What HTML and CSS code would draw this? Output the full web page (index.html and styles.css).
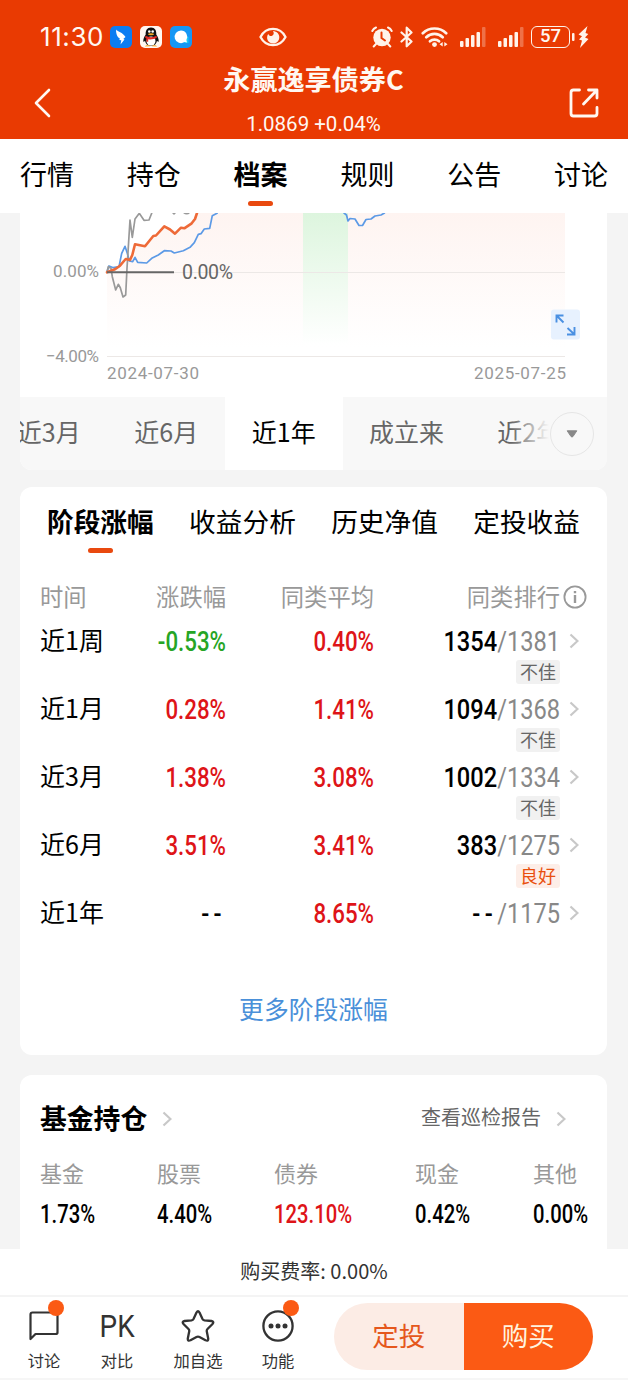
FILE: index.html
```
<!DOCTYPE html>
<html lang="zh-CN">
<head>
    <meta charset="UTF-8">
    <meta name="viewport" content="width=device-width, initial-scale=1.0">
    <title>永赢逸享债券C</title>
    <link rel="stylesheet" href="styles.css">
</head>
<body>
    <header class="header">
        <div class="status">
            <span class="time">11:30</span>
            <svg class="app-icon" width="22" height="22" viewBox="0 0 22 22">
                <rect width="22" height="22" rx="5" fill="#0b7df2"/>
                <path d="M6 3.500c1 1.800 7 3 9.500 7.500l-2.200 2 1.200.5-4 5 .8-4.200-2.200-.3 1-1.200C7.800 11.500 6 9 6 3.500z" fill="#fff"/>
            </svg>
            <svg class="app-icon" width="22" height="22" viewBox="0 0 22 22">
                <rect width="22" height="22" rx="5" fill="#fff7f2"/>
                <path d="M11 1.500c-4 0-5.500 3-5.300 7C4.500 10.500 3 13 3.300 15.500c.6.8 1.700-.7 1.700-.7.5 3 2.500 5 6 5s5.500-2 6-5c0 0 1.100 1.500 1.700.7.3-2.500-1.200-5-2.400-7 .2-4-1.300-7-5.300-7z" fill="#111"/>
                <ellipse cx="11" cy="15" rx="4.500" ry="4.500" fill="#fff"/>
                <path d="M5.500 9.800c3 1.800 8 1.800 11 0l.4 2c-3 1.700-6.500 1.800-8.700 1.400v2.600H6.500v-3.200l-1.300-.8z" fill="#e22a24"/>
                <circle cx="9.300" cy="5.500" r="1.300" fill="#fff"/>
                <circle cx="12.700" cy="5.500" r="1.300" fill="#fff"/>
                <ellipse cx="11" cy="8.300" rx="3" ry="1" fill="#f5a623"/>
                <path d="M5 20.500c.5-1.500 4-1.800 5.300-.3zM17 20.500c-.5-1.500-4-1.800-5.300-.3z" fill="#f5a623"/>
            </svg>
            <svg class="app-icon" width="22" height="22" viewBox="0 0 22 22">
                <rect width="22" height="22" rx="5" fill="#1597f5"/>
                <path d="M14 11h4.500v6c-1.500.3-3.500 0-4.500-.6z" fill="#19c8f6"/>
                <path d="M11 4.500a6.300 6.300 0 1 0 3.500 11.500l2.500.5-.6-2.500A6.300 6.300 0 0 0 11 4.500z" fill="#fff"/>
            </svg>
            <svg class="eye" width="28" height="20" viewBox="0 0 28 20" fill="none" stroke="#fff3ea" stroke-width="2.300">
                <path d="M1.500 10C7-.8 21-.8 26.500 10 21 20.800 7 20.800 1.500 10z"/>
                <path d="M14 4c1.500 2.500.5 4.500-1.500 5-1.500.4-2.500-.5-3.300-2C6.500 11 9 16.500 14 16.500c3.700 0 6.300-2.700 6.300-6.300C20.300 7 18 4.300 14 4z" fill="#fff3ea" stroke="none"/>
            </svg>
            <div class="status-right">
                <svg width="22" height="22" viewBox="0 0 22 22" fill="none" stroke="#fff3ea" stroke-width="2" stroke-linecap="round">
                    <circle cx="11" cy="11.500" r="8.700" fill="#fff3ea" stroke="none"/>
                    <path d="M1.300 5C2 3.500 3.300 2.200 5 1.500M20.700 5C20 3.500 18.700 2.200 17 1.500M5 18l-2.300 2.500M17 18l2.300 2.500"/>
                    <path d="M10.500 6.500V12l3.500 2.500" stroke="#e93a02"/>
                </svg>
                <svg class="bluetooth" width="14" height="22" viewBox="0 0 14 22" fill="none" stroke="#fff3ea" stroke-width="2.200" stroke-linejoin="round" stroke-linecap="round">
                    <path d="M1.500 6.500l10 9-4.800 4.800V1.700l4.800 4.800-10 9"/>
                </svg>
                <svg class="wifi" width="27" height="22" viewBox="0 0 27 22" fill="none" stroke="#fff3ea" stroke-width="2.700" stroke-linecap="round">
                    <path d="M1.800 7.200c6.500-6.300 16.900-6.300 23.400 0M5.300 11.300c4.600-4.500 11.800-4.500 16.400 0M9 15.300c2.500-2.300 6.500-2.300 9 0"/>
                    <circle cx="13.500" cy="18.600" r="2.400" fill="#fff3ea" stroke="none"/>
                    <path d="M21.700 16v4.400L18.500 18.200zM23.300 16v4.400l3.200-2.200z" fill="#fff3ea" stroke="none"/>
                </svg>
                <svg class="signal" width="26" height="20" viewBox="0 0 26 20" fill="#fff3ea">
                    <rect y="14" width="3.500" height="6" rx="1"/>
                    <rect x="5.500" y="11" width="3.500" height="9" rx="1"/>
                    <rect x="11" y="8" width="3.500" height="12" rx="1"/>
                    <rect x="16.500" y="5" width="3.500" height="15" rx="1"/>
                    <rect x="22" width="3.500" height="20" rx="1" opacity=".3"/>
                </svg>
                <svg class="signal" width="26" height="20" viewBox="0 0 26 20" fill="#fff3ea">
                    <rect y="14" width="3.500" height="6" rx="1"/>
                    <rect x="5.500" y="11" width="3.500" height="9" rx="1"/>
                    <rect x="11" y="8" width="3.500" height="12" rx="1"/>
                    <rect x="16.500" y="5" width="3.500" height="15" rx="1"/>
                    <rect x="22" width="3.500" height="20" rx="1" opacity=".3"/>
                </svg>
                <span class="battery">57</span>
                <svg class="bolt" width="17" height="22" viewBox="0 0 17 22" fill="#fff3ea">
                    <rect x="0" y="7" width="2.500" height="8" rx="1"/>
                    <path d="M15.500 0L6.500 8.500l3.500 1.700-3 3.300 3 1L8 22l8.500-9-3.500-1.500 3.300-3.500-2.800-1z"/>
                </svg>
            </div>
        </div>
        <div class="nav">
            <svg width="17" height="30" viewBox="0 0 17 30" fill="none" stroke="#fff8f2" stroke-width="2.600" stroke-linecap="round" stroke-linejoin="round">
                <path d="M15 2L2 15l13 13"/>
            </svg>
            <div class="nav-title">
                <h1>永赢逸享债券C</h1>
                <p>1.0869 +0.04%</p>
            </div>
            <svg width="30" height="30" viewBox="0 0 30 30" fill="none" stroke="#fff8f2" stroke-width="2.800" stroke-linecap="round" stroke-linejoin="round">
                <path d="M10.500 2H4.500A2.500 2.500 0 0 0 2 4.500v21A2.500 2.500 0 0 0 4.500 28h21a2.500 2.500 0 0 0 2.500-2.500v-6M14.500 16L27.500 2.500M19.500 2H28v8"/>
            </svg>
        </div>
    </header>

    <nav class="tabs">
        <span>行情</span>
        <span>持仓</span>
        <span class="active">档案</span>
        <span>规则</span>
        <span>公告</span>
        <span>讨论</span>
    </nav>

    <main class="content">
        <section class="chart-card">
            <svg class="chart" width="587" height="184" viewBox="0 0 587 184">
                <defs>
                    <linearGradient id="area" x1="0" y1="0" x2="0" y2="1">
                        <stop offset="0" stop-color="#fef4f1"/>
                        <stop offset="1" stop-color="#fff"/>
                    </linearGradient>
                    <linearGradient id="drawdown" x1="0" y1="0" x2="0" y2="1">
                        <stop offset="0" stop-color="#ddf5de"/>
                        <stop offset="1" stop-color="#fff"/>
                    </linearGradient>
                </defs>
                <path d="M87 59L100 52.700 110 47 115 31 125 33 144 13 155 21 172 10 177 0H545V134H87z" fill="url(#area)"/>
                <rect x="283" width="45" height="132" fill="url(#drawdown)"/>
                <path d="M87 59.500H545M87 143.500H545" stroke="#ece8e6"/>
                <g fill="none" stroke-linejoin="round" stroke-linecap="round">
                    <path d="M87 58.700L89 53 93.300 54.700 99 53.700 101.700 40.300 105 33.300 107.300 40.300 109.300 48 112.700 48.700 115 44.300 117.700 49.300 126.700 50 131.700 45.300 138.300 42 144.300 37.700 151 38 154.300 40 163.300 37.700 170 34.300 174.300 29.700 178.300 21.300 181 20.700 184.300 16 189.700 15.300 192.300 2.700 197 .3" stroke="#5c9ae6" stroke-width="1.700"/>
                    <path d="M324 0l2.500 2 1.500 6 2-2.500 5 .5 4 6.500h3.500l3.500-6 5-.5 4-3 6-1 3.500-2" stroke="#5c9ae6" stroke-width="1.700"/>
                    <path d="M87 59L88.300 53.700 91 55.300 92.300 63.700 95.700 77 98.300 71.300 100.300 74.700 103 84 105.700 82 107 55.300 110 7 112.300 24.300 115 6 119.300.3 124 7.300 129 7 131.700.3" stroke="#999" stroke-width="1.700"/>
                    <path d="M87 59.300L95 56.300 100 52.700 105.700 46 110 47 112.300 42 115 31.300 125 33.300 133.300 23 136 22.500 144.300 13.300 150 16.500 155 20.700 161 14.700 164.300 15.300 171.700 10.300 175 6 177 0" stroke="#ee6a38" stroke-width="2.600"/>
                </g>
                <path d="M87 59.300H154" stroke="#666" stroke-width="2"/>
                <path d="M152 0h4l-2 2zM163 0h7q-3 3-7 0z" fill="#999"/>
                <g class="axis-text">
                    <text x="33" y="64" textLength="46">0.00%</text>
                    <text x="26" y="149" textLength="53">−4.00%</text>
                    <text x="87" y="166" textLength="92">2024-07-30</text>
                    <text x="454" y="166" textLength="92">2025-07-25</text>
                </g>
                <text class="zero-text" x="162" y="65.500" textLength="51">0.00%</text>
                <rect x="531" y="96.500" width="29" height="30" rx="3" fill="#e7f1fe"/>
                <path d="M543.500 102.500h-7v7M537 103l6.500 6.500M547 121.500h7.500V114M554 121l-6.500-6" fill="none" stroke="#4a90e2" stroke-width="1.900"/>
            </svg>
            <div class="periods">
                <span>近3月</span>
                <span>近6月</span>
                <span class="active">近1年</span>
                <span class="wide">成立来</span>
                <span>近2年</span>
                <div class="fade">
                    <button class="more-period" type="button">
                        <svg width="12" height="8" viewBox="0 0 12 8"><path d="M1.200.8h9.600L7 6.500q-1 1-2 0z" fill="#888" stroke="#888" stroke-linejoin="round"/></svg>
                    </button>
                </div>
            </div>
        </section>

        <section class="card stage">
            <div class="sub-tabs">
                <span class="active">阶段涨幅</span>
                <span>收益分析</span>
                <span>历史净值</span>
                <span>定投收益</span>
            </div>
            <div class="row row-head">
                <span>时间</span>
                <span>涨跌幅</span>
                <span>同类平均</span>
                <span>同类排行</span>
                <svg width="24" height="24" viewBox="0 0 24 24" fill="none" stroke="#999" stroke-width="1.800">
                    <circle cx="12" cy="12" r="10.600"/>
                    <path d="M12 10v8M12 6v2.200" stroke-width="2.400"/>
                </svg>
            </div>
            <div class="row">
                <span>近1周</span>
                <b class="num down">-0.53%</b>
                <b class="num up">0.40%</b>
                <b class="num">1354<i>/1381</i></b>
                <svg class="arrow" width="10" height="16" viewBox="0 0 10 16"><path d="M1.500 1.500L8.500 8l-7 6.500"/></svg>
                <em class="tag">不佳</em>
            </div>
            <div class="row">
                <span>近1月</span>
                <b class="num up">0.28%</b>
                <b class="num up">1.41%</b>
                <b class="num">1094<i>/1368</i></b>
                <svg class="arrow" width="10" height="16" viewBox="0 0 10 16"><path d="M1.500 1.500L8.500 8l-7 6.500"/></svg>
                <em class="tag">不佳</em>
            </div>
            <div class="row">
                <span>近3月</span>
                <b class="num up">1.38%</b>
                <b class="num up">3.08%</b>
                <b class="num">1002<i>/1334</i></b>
                <svg class="arrow" width="10" height="16" viewBox="0 0 10 16"><path d="M1.500 1.500L8.500 8l-7 6.500"/></svg>
                <em class="tag">不佳</em>
            </div>
            <div class="row">
                <span>近6月</span>
                <b class="num up">3.51%</b>
                <b class="num up">3.41%</b>
                <b class="num">383<i>/1275</i></b>
                <svg class="arrow" width="10" height="16" viewBox="0 0 10 16"><path d="M1.500 1.500L8.500 8l-7 6.500"/></svg>
                <em class="tag good">良好</em>
            </div>
            <div class="row">
                <span>近1年</span>
                <b class="num"><u>--</u></b>
                <b class="num up">8.65%</b>
                <b class="num"><u>--</u><i>/1175</i></b>
                <svg class="arrow" width="10" height="16" viewBox="0 0 10 16"><path d="M1.500 1.500L8.500 8l-7 6.500"/></svg>
            </div>
            <a class="more-link">更多阶段涨幅</a>
        </section>

        <section class="card holdings">
            <div class="holdings-head">
                <h2>基金持仓</h2>
                <svg class="arrow" width="10" height="16" viewBox="0 0 10 16"><path d="M1.500 1.500L8.500 8l-7 6.500"/></svg>
                <span class="report">查看巡检报告</span>
                <svg class="arrow" width="10" height="16" viewBox="0 0 10 16"><path d="M1.500 1.500L8.500 8l-7 6.500"/></svg>
            </div>
            <dl class="assets">
                <div><dt>基金</dt><dd>1.73%</dd></div>
                <div><dt>股票</dt><dd>4.40%</dd></div>
                <div><dt>债券</dt><dd class="up">123.10%</dd></div>
                <div><dt>现金</dt><dd>0.42%</dd></div>
                <div><dt>其他</dt><dd>0.00%</dd></div>
            </dl>
        </section>
    </main>

    <footer class="footer">
        <div class="fee">购买费率: 0.00%</div>
        <div class="actions">
            <div class="action">
                <div class="icon">
                    <svg width="30" height="30" viewBox="0 0 30 30" fill="none" stroke="#333" stroke-width="2.200" stroke-linejoin="round">
                        <path d="M1.500 28V3.500Q1.500 1.500 3.500 1.500h23Q28.500 1.500 28.500 3.500v18Q28.500 23 26.500 23H6.500z"/>
                    </svg>
                    <span class="dot"></span>
                </div>
                <span>讨论</span>
            </div>
            <div class="action pk">
                <div class="icon"><strong>PK</strong></div>
                <span>对比</span>
            </div>
            <div class="action fav">
                <div class="icon">
                    <svg width="34" height="32" viewBox="0 0 34 32" fill="none" stroke="#333" stroke-width="2.300" stroke-linejoin="round">
                        <path d="M15.500 2.500Q17 0 18.500 2.500L21.500 9Q22 10 23.500 10.300L30.500 11Q33.500 11.600 31.500 14L26.500 19Q25.500 20 25.800 21.500L27.200 28.500Q27.500 31.500 24.500 30.300L18.500 27Q17 26.200 15.500 27L9.500 30.300Q6.500 31.500 6.800 28.500L8.200 21.500Q8.500 20 7.500 19L2.500 14Q.5 11.600 3.500 11L10.500 10.300Q12 10 12.500 9z"/>
                    </svg>
                </div>
                <span>加自选</span>
            </div>
            <div class="action">
                <div class="icon">
                    <svg width="32" height="32" viewBox="0 0 32 32">
                        <circle cx="16" cy="16" r="14.600" fill="none" stroke="#333" stroke-width="2.300"/>
                        <g fill="#333"><circle cx="9" cy="16" r="2.500"/><circle cx="16" cy="16" r="2.500"/><circle cx="23" cy="16" r="2.500"/></g>
                    </svg>
                    <span class="dot"></span>
                </div>
                <span>功能</span>
            </div>
            <div class="buttons">
                <button class="plan" type="button">定投</button>
                <button class="buy" type="button">购买</button>
            </div>
        </div>
    </footer>
</body>
</html>
```
FILE: styles.css
```
* {
    box-sizing: border-box;
}

body {
    margin: 0;
    width: 628px;
    height: 1380px;
    display: flex;
    flex-direction: column;
    overflow: hidden;
    background: #fff;
    color: #000;
    font-family: "Noto Sans CJK SC", sans-serif;
}

svg {
    display: block;
    flex: none;
}

h1, h2, p, dl, dd {
    margin: 0;
}

button {
    border: none;
    padding: 0;
    font-family: inherit;
}

/* header */
.header {
    height: 139px;
    flex: none;
    background: #e93a02;
    color: #fff8f2;
}

.status {
    height: 60px;
    padding: 13px 39px 0 40px;
    display: flex;
    align-items: center;
}

.time {
    width: 70px;
    font: 26px/30px Inter, sans-serif;
    letter-spacing: 0.6px;
}

.app-icon {
    margin-right: 8px;
}

.eye {
    margin-left: 59px;
}

.status-right {
    margin-left: auto;
    display: flex;
    align-items: center;
}

.bluetooth {
    margin-left: 7px;
}

.wifi {
    margin-left: 7px;
}

.signal {
    margin-left: 12px;
}

.battery {
    width: 39px;
    height: 22px;
    margin-left: 7px;
    border: 1.5px solid #fff3ea;
    border-radius: 6px;
    font: 500 18.5px/19px Roboto, sans-serif;
    text-align: center;
}

.bolt {
    margin-left: 2px;
}

.nav {
    height: 79px;
    padding: 7px 29px 0 34px;
    display: flex;
    align-items: center;
    justify-content: space-between;
}

.nav-title {
    align-self: flex-start;
    margin-left: 7px;
    text-align: center;
}

.nav-title h1 {
    margin-top: -6px;
    font-size: 27.1px;
    line-height: 36px;
    font-weight: 700;
}

.nav-title p {
    margin-top: 15px;
    font: 20.5px/24px Roboto, sans-serif;
}

/* main tabs */
.tabs {
    height: 74px;
    flex: none;
    padding: 0 20px;
    display: flex;
    justify-content: space-between;
    font-size: 27px;
    line-height: 69px;
}

.tabs .active,
.sub-tabs .active {
    font-weight: 700;
    display: flex;
    flex-direction: column;
    align-items: center;
}

.tabs .active::after,
.sub-tabs .active::after {
    content: "";
    width: 25px;
    height: 5px;
    border-radius: 3px;
    background: #e9490f;
}

.tabs .active::after {
    margin-top: -7px;
}

/* cards */
.content {
    flex: 1;
    min-height: 0;
    padding: 0 21px 0 20px;
    overflow: hidden;
    background: #f4f4f4;
}

.chart-card {
    background: #fff;
    border-radius: 0 0 12px 12px;
    overflow: hidden;
}

.axis-text {
    font: 17px Roboto, sans-serif;
    fill: #999;
}

.zero-text {
    font: 19.5px Roboto, sans-serif;
    fill: #666;
}

.periods {
    position: relative;
    height: 73px;
    display: flex;
    margin-left: -30px;
    background: #f8f8f8;
    color: #666;
    font-size: 25px;
    line-height: 69px;
    text-align: center;
}

.periods span {
    width: 117.5px;
    flex: none;
}

.periods .wide {
    width: 128px;
}

.periods .active {
    background: #fff;
    color: #000;
}

.fade {
    position: absolute;
    top: 0;
    right: 0;
    width: 96px;
    height: 100%;
    padding: 15px 13px 0 0;
    display: flex;
    justify-content: flex-end;
    background: linear-gradient(to right, rgba(248, 248, 248, 0), #f8f8f8 38px);
}

.more-period {
    width: 44px;
    height: 44px;
    display: flex;
    align-items: center;
    justify-content: center;
    border: 1.5px solid #e6e6e6;
    border-radius: 50%;
    background: #f8f8f8;
}

.card {
    background: #fff;
    border-radius: 12px;
}

.stage {
    height: 568px;
    margin-top: 17px;
    padding: 0 20px;
    display: flex;
    flex-direction: column;
}

.sub-tabs {
    height: 93px;
    padding: 0 7px;
    display: flex;
    justify-content: space-between;
    font-size: 26.7px;
    line-height: 67px;
}

.sub-tabs .active::after {
    margin-top: -6px;
}

.row {
    height: 68px;
    display: grid;
    grid-template-columns: 80px 106px 148px 186px 1fr;
    grid-template-rows: 36px 25px;
    align-items: center;
    text-align: right;
    font-size: 25px;
    line-height: 36px;
}

.row span {
    padding-bottom: 4px;
    line-height: 32px;
}

.row span:first-child {
    text-align: left;
}

.row-head {
    height: 43px;
    font-size: 23.3px;
    color: #999;
}

.row-head svg {
    margin: -3px 0 0 3px;
}

.num {
    padding-top: 1px;
    font: 500 27px/36px Roboto, sans-serif;
    transform: scaleX(0.875);
    transform-origin: right;
}

.num.up,
.num.down {
    transform: scaleX(0.825);
}

.num i {
    font-style: normal;
    font-weight: 400;
    color: #888;
}

.num u {
    text-decoration: none;
    letter-spacing: 5px;
}

.up {
    color: #de1418;
}

.down {
    color: #26a526;
}

.arrow {
    margin-left: 9px;
    fill: none;
    stroke: #c8c8c8;
    stroke-width: 2.2;
}

.tag {
    grid-column: 4;
    justify-self: end;
    align-self: end;
    width: 44px;
    height: 24px;
    border-radius: 3px;
    background: #f1f1f1;
    color: #666;
    font-size: 18px;
    font-style: normal;
    line-height: 22px;
    text-align: center;
}

.good {
    background: #fdeee8;
    color: #e9500f;
}

.more-link {
    margin-top: 27px;
    color: #4a90d9;
    font-size: 24.8px;
    line-height: 36px;
    text-align: center;
}

.holdings {
    height: 220px;
    margin-top: 20px;
    padding: 24px 20px 0;
}

.holdings-head {
    height: 40px;
    display: flex;
    align-items: center;
}

.holdings-head h2 {
    margin-right: 6px;
    padding-bottom: 3px;
    font-size: 26.8px;
    line-height: 37px;
}

.report {
    margin: 0 6px 0 auto;
    padding-bottom: 5px;
    color: #666;
    font-size: 20px;
}

.holdings-head .arrow:last-child {
    margin-right: 21px;
}

.assets {
    margin-top: 17px;
    display: grid;
    grid-template-columns: 117px 117px 141px 118px 1fr;
}

.assets dt {
    color: #999;
    font-size: 22px;
    line-height: 32px;
}

.assets dd {
    margin-top: 10px;
    font: 500 25px/34px Roboto, sans-serif;
    transform: scaleX(0.81);
    transform-origin: left;
}

/* bottom bar */
.footer {
    height: 131px;
    flex: none;
    background: #fff;
    color: #333;
}

.fee {
    height: 48px;
    border-bottom: 2px solid #f4f4f4;
    font-size: 20px;
    line-height: 44px;
    text-align: center;
}

.actions {
    height: 83px;
    padding: 0 35px 0 8px;
    display: flex;
    border-bottom: 2px solid #f6f6f6;
}

.action {
    width: 72px;
    flex: none;
    display: flex;
    flex-direction: column;
    align-items: center;
    font-size: 16.3px;
    line-height: 24px;
}

.pk {
    width: 74px;
}

.fav {
    width: 88px;
}

.icon {
    position: relative;
    height: 32px;
    margin: 13px 0 6px;
    display: flex;
    align-items: center;
}

.icon strong {
    font: 32px/32px Roboto, sans-serif;
    transform: scaleX(0.87);
}

.dot {
    position: absolute;
    top: -10px;
    right: -5px;
    width: 16px;
    height: 16px;
    border-radius: 50%;
    background: #fb5a14;
}

.buttons {
    width: 259px;
    height: 67px;
    margin: 6px 0 0 auto;
    display: flex;
    border-radius: 34px;
    overflow: hidden;
}

.buttons button {
    flex: 1;
    padding-bottom: 4px;
    font-size: 26.5px;
    line-height: 60px;
}

.plan {
    background: #fcece5;
    color: #e5571c;
}

.buy {
    background: #fb5a14;
    color: #fff3df;
}
```
